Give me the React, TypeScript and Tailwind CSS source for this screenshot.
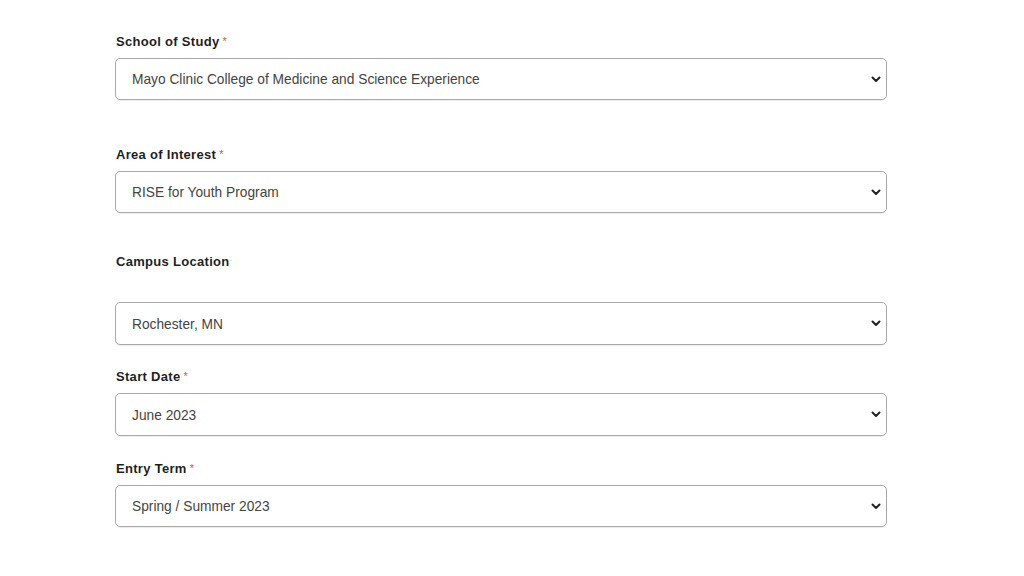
import React from "react"

type Field = {
  label: string
  value: string
  required: boolean
  labelTop: string
  boxGap: string
  boxH: string
}

const fields: Field[] = [
  { label: "School of Study", value: "Mayo Clinic College of Medicine and Science Experience", required: true, labelTop: "mt-[34px]", boxGap: "mt-[8px]", boxH: "h-[42px]" },
  { label: "Area of Interest", value: "RISE for Youth Program", required: true, labelTop: "mt-[47px]", boxGap: "mt-[8px]", boxH: "h-[42px]" },
  { label: "Campus Location", value: "Rochester, MN", required: false, labelTop: "mt-[41px]", boxGap: "mt-[32px]", boxH: "h-[43px]" },
  { label: "Start Date", value: "June 2023", required: true, labelTop: "mt-[24px]", boxGap: "mt-[8px]", boxH: "h-[43px]" },
  { label: "Entry Term", value: "Spring / Summer 2023", required: true, labelTop: "mt-[25px]", boxGap: "mt-[8px]", boxH: "h-[42px]" },
]

function Chevron() {
  return (
    <svg width="10" height="7" viewBox="0 0 10 7" fill="none">
      <path d="M1.5 1.5 L5 5 L8.5 1.5" stroke="#222" strokeWidth="2" strokeLinecap="round" strokeLinejoin="round" />
    </svg>
  )
}

export default function App() {
  return (
    <div className="w-[1024px] h-[576px] bg-white overflow-hidden" style={{ fontFamily: '"Liberation Sans", Arial, sans-serif' }}>
      <div className="ml-[115px] w-[772px] flex flex-col">
        {fields.map(f => (
          <div key={f.label} className="flex flex-col">
            <div className={`${f.labelTop} h-4 leading-4 text-[13px] tracking-[0.3px] font-bold text-[#1f1f1f] pl-[1px]`}>
              {f.label}
              {f.required ? (
                <span className="text-[#d9534f] font-normal text-[11px] ml-[3px] relative -top-[1px]">*</span>
              ) : (
                <span className="text-[#bbb] font-normal text-[9px] relative -top-[3px]">·</span>
              )}
            </div>
            <div className={`${f.boxGap} ${f.boxH} border border-[#a9a9a9] rounded-[5px] shadow-[0_1px_1px_rgba(0,0,0,0.08)] flex items-center justify-between pl-4 pr-[5px]`}>
              <span className="text-[13.75px] text-[#444] pt-[3px]">{f.value}</span>
              <Chevron />
            </div>
          </div>
        ))}
      </div>
    </div>
  )
}
